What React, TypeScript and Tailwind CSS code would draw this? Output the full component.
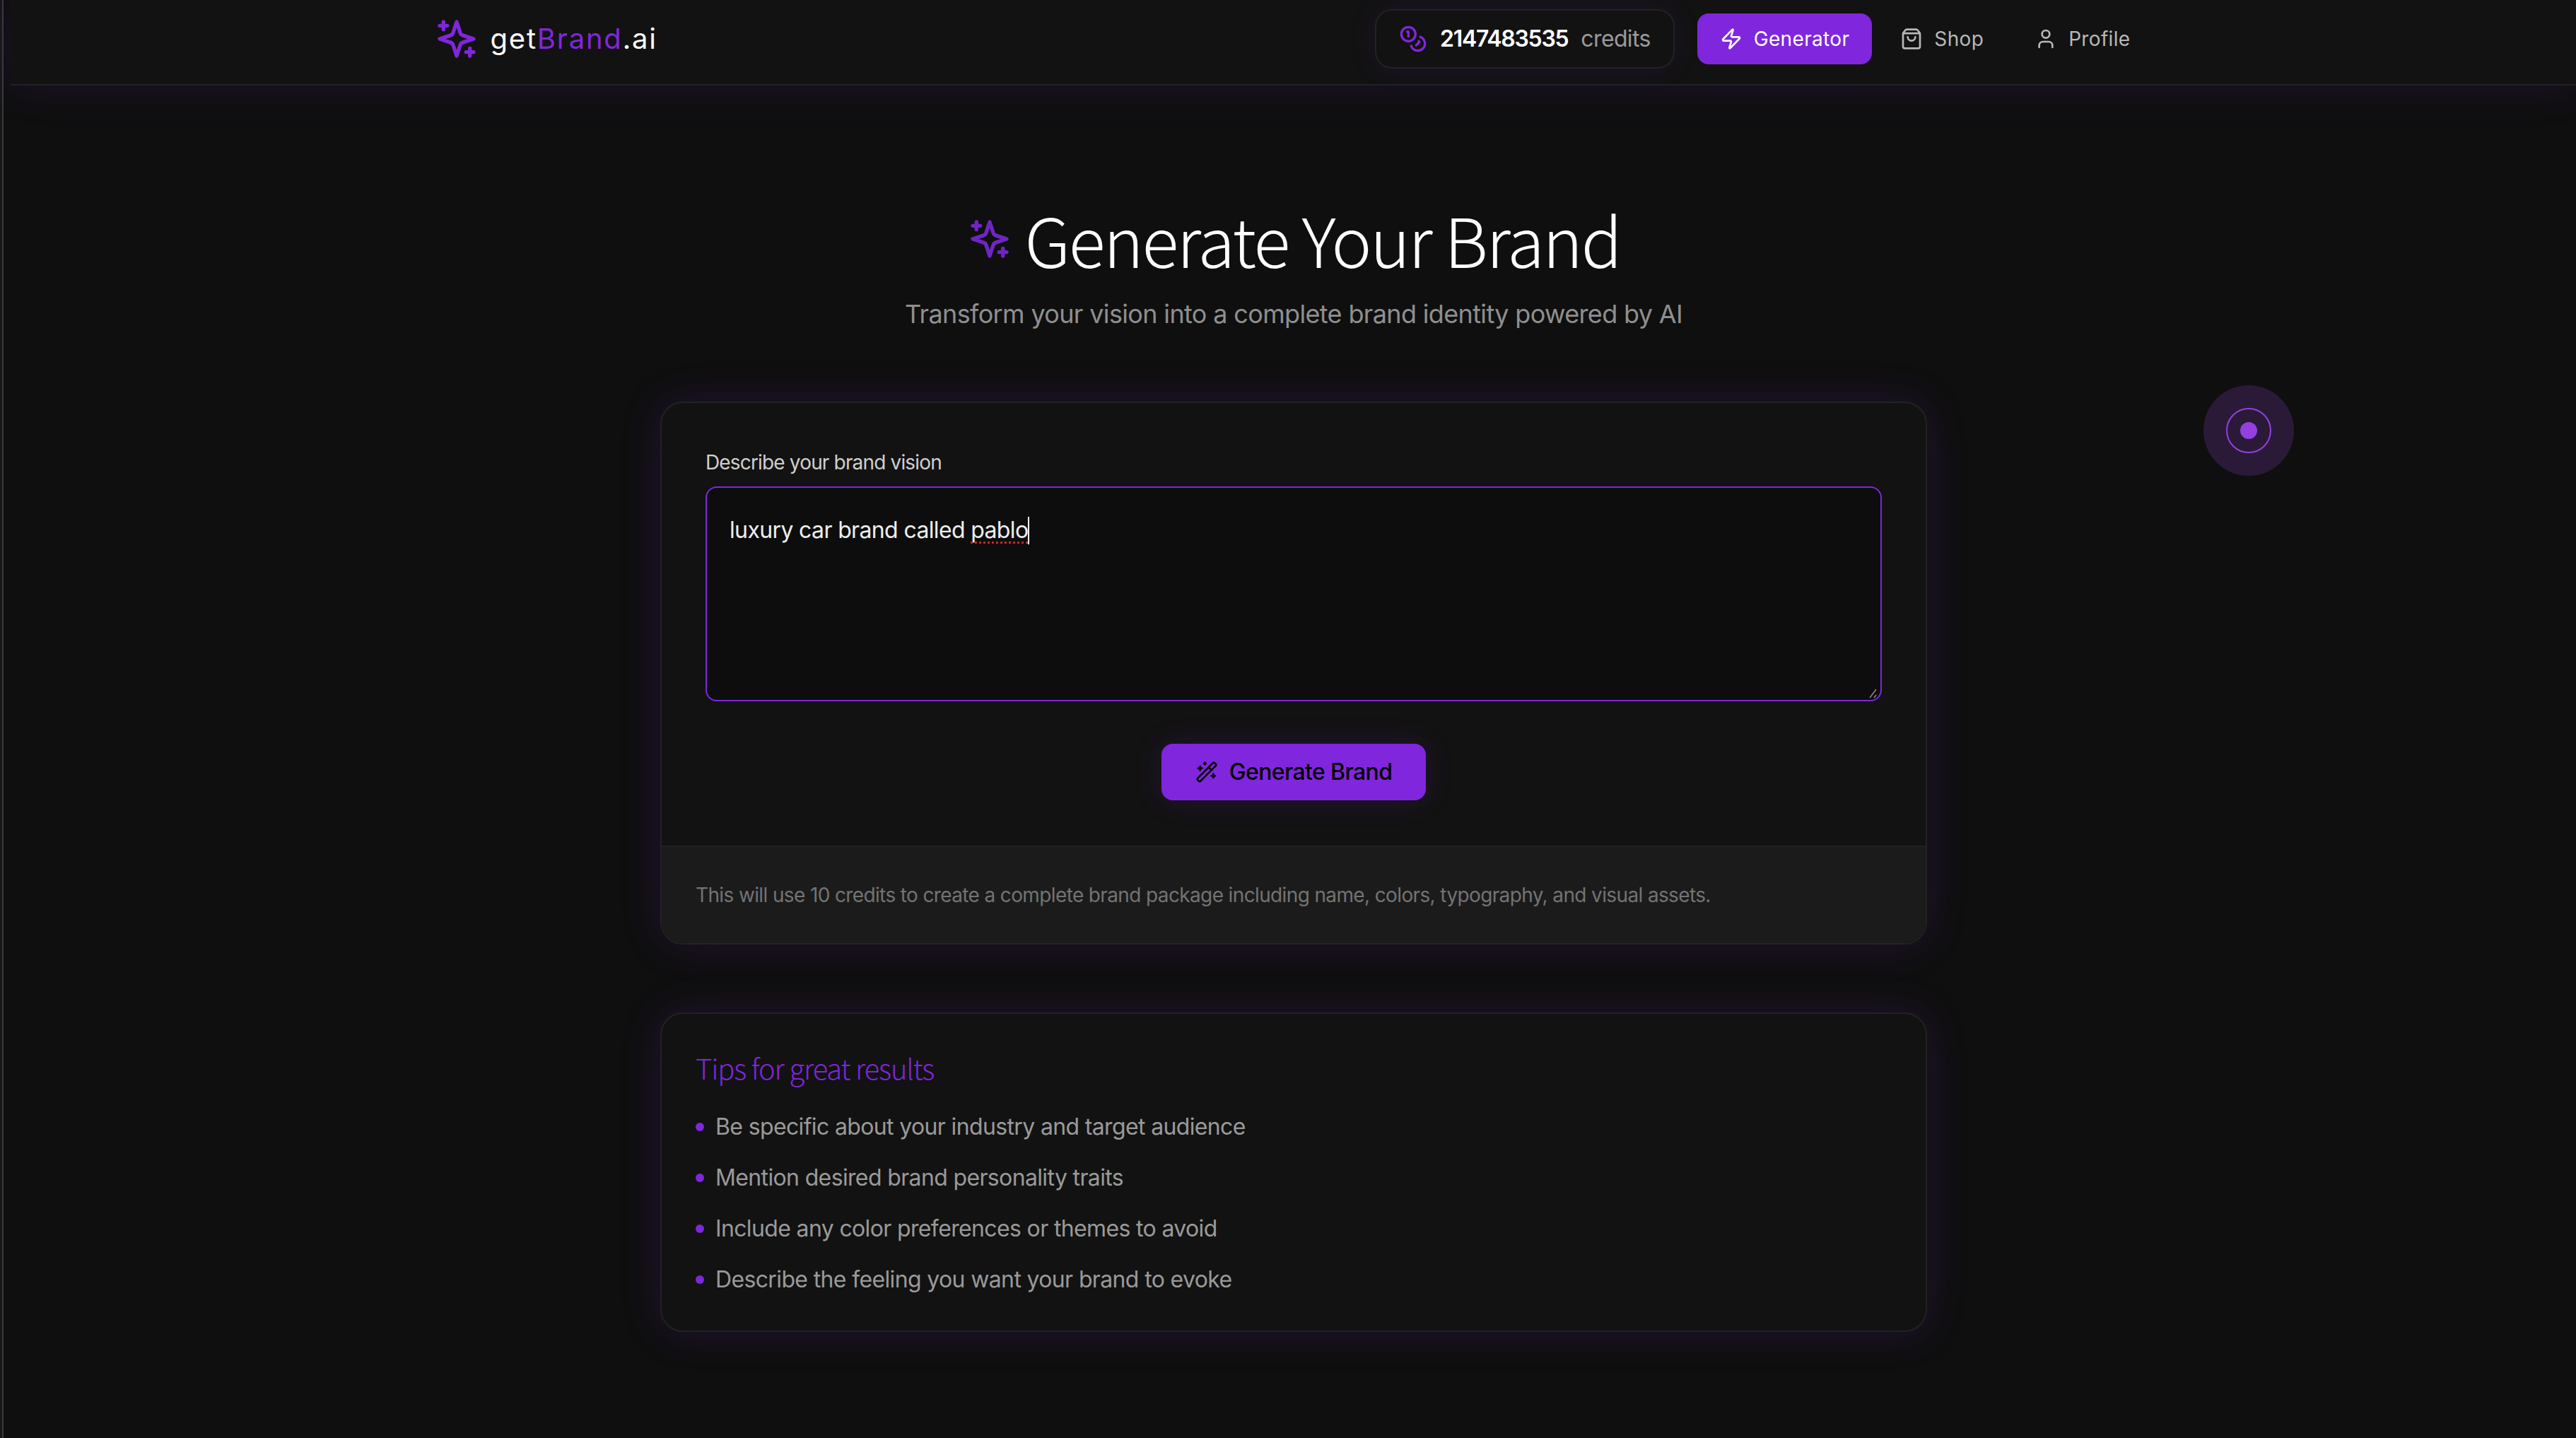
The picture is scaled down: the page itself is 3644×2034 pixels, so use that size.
import { Coins, ShoppingBag, User, WandSparkles, Zap } from "lucide-react";

const tips = [
  "Be specific about your industry and target audience",
  "Mention desired brand personality traits",
  "Include any color preferences or themes to avoid",
  "Describe the feeling you want your brand to evoke",
];

function BrandSparkles({ className }: { className: string }) {
  return (
    <svg className={className} viewBox="0 0 24 24" fill="none" stroke="currentColor" strokeWidth="2" strokeLinecap="round" strokeLinejoin="round">
      <path d="m12 3-1.912 5.813a2 2 0 0 1-1.275 1.275L3 12l5.813 1.912a2 2 0 0 1 1.275 1.275L12 21l1.912-5.813a2 2 0 0 1 1.275-1.275L21 12l-5.813-1.912a2 2 0 0 1-1.275-1.275L12 3Z" />
      <path d="M5 3v4" />
      <path d="M19 17v4" />
      <path d="M3 5h4" />
      <path d="M17 19h4" />
    </svg>
  );
}

function NavBar() {
  return (
    <header className="relative z-10 h-[121px] border-b-2 border-[#222222] bg-[#121212] shadow-[0_4px_60px_rgba(128,38,222,0.12)]">
      <div className="mx-auto flex h-[110px] w-[2560px] items-center justify-between px-[64px]">
        <div className="flex items-center gap-[16px]">
          <BrandSparkles className="h-[64px] w-[64px] text-[#8026dd]" />
          <span className="text-[40px] tracking-[0.045em] text-white">
            get<span className="text-[#8026dd]">Brand</span>.ai
          </span>
        </div>
        <nav className="flex items-center gap-2 text-[28px] leading-[40px] tracking-[0.012em]">
          <div className="mr-6 flex h-[84px] items-center gap-[18px] rounded-[24px] border-2 border-[#222222] bg-[#121212] px-8 text-[32px] tracking-[-0.02em] shadow-[0_0_40px_rgba(128,38,222,0.1)]">
            <Coins className="h-10 w-10 text-[#8026dd]" strokeWidth={2} />
            <span className="font-semibold tracking-[-0.04em] text-white">2147483535</span>
            <span className="text-[#9a9a9a]">credits</span>
          </div>
          <div className="flex h-[72px] items-center gap-4 rounded-[16px] bg-[#8026dd] px-8 text-white">
            <Zap className="h-8 w-8" strokeWidth={2} />
            Generator
          </div>
          <div className="flex h-[72px] items-center gap-4 px-8 text-[#b8b8b8]">
            <ShoppingBag className="h-8 w-8" strokeWidth={2} />
            Shop
          </div>
          <div className="flex h-[72px] items-center gap-4 px-8 text-[#b8b8b8]">
            <User className="h-8 w-8" strokeWidth={2} />
            Profile
          </div>
        </nav>
      </div>
    </header>
  );
}

function BrandForm() {
  return (
    <section className="mt-[96px] overflow-hidden rounded-[32px] border-2 border-[#222222] bg-[#121212] shadow-[0_0_60px_rgba(128,38,222,0.16)]">
      <div className="p-[62px] pb-[64px]">
        <label className="block text-[28px] leading-[44px] tracking-[-0.03em] text-[#cfcfcf]">Describe your brand vision</label>
        <div className="relative mt-3">
          <textarea className="block h-[304px] w-full resize-none rounded-[16px] border-2 border-[#8026dd] bg-[#0d0d0d]" />
          <div className="absolute left-[34px] top-[38px] flex items-center text-[32px] leading-[48px] tracking-[-0.02em] text-[#eeeeee]">
            <span>luxury car brand called&nbsp;</span>
            <span className="relative">
              pablo
              <span className="absolute inset-x-0 bottom-[5px] border-b-[3px] border-dotted border-[#c62828]" />
            </span>
            <span className="h-[39px] w-[2px] bg-white" />
          </div>
          <svg className="absolute bottom-[3px] right-[4px] h-4 w-4" viewBox="0 0 16 16" fill="none" stroke="#8a8a8a" strokeWidth="1.5">
            <path d="M3 14 12 2" />
            <path d="M9 14l3-4" />
          </svg>
        </div>
        <div className="mt-[60px] flex justify-center">
          <button className="flex h-[80px] w-[374px] items-center justify-center gap-4 rounded-[16px] bg-[#8026dd] text-[32px] font-medium tracking-[-0.02em] text-black shadow-[0_0_40px_rgba(128,38,222,0.16)]">
            <WandSparkles className="h-8 w-8" strokeWidth={2} />
            Generate Brand
          </button>
        </div>
      </div>
      <div className="border-t-2 border-[#222222] bg-[#1b1b1b] p-[48px] text-[28px] leading-[40px] tracking-[-0.0225em] text-[#737373]">
        This will use 10 credits to create a complete brand package including name, colors, typography, and visual assets.
      </div>
    </section>
  );
}

function TipsCard() {
  return (
    <section className="mt-[96px] rounded-[32px] border-2 border-[#222222] bg-[#121212] p-[48px] shadow-[0_0_60px_rgba(128,38,222,0.16)]">
      <h2 className="font-['Noto_Sans_CJK_SC',sans-serif] text-[40px] font-light leading-[56px] tracking-[-0.03em] text-[#8026dd]">Tips for great results</h2>
      <ul className="mt-[32px] flex flex-col gap-6">
        {tips.map((tip) => (
          <li key={tip} className="flex items-center gap-4 text-[32px] leading-[48px] tracking-[-0.02em] text-[#9a9a9a]">
            <span className="h-3 w-3 rounded-full bg-[#8026dd]" />
            {tip}
          </li>
        ))}
      </ul>
    </section>
  );
}

export default function App() {
  return (
    <div className="relative flex h-[2034px] overflow-hidden bg-[#0f0f0f] font-['Inter',sans-serif]">
      <div className="w-[5px] shrink-0 border-r-2 border-[#3a3a3a] bg-[#171717]" />
      <div className="min-w-0 flex-1">
        <div className="pl-[10px]">
          <NavBar />
        </div>
        <main className="ml-[929px] w-[1792px] pt-[161px]">
          <div className="flex items-center justify-center gap-[18px]">
            <BrandSparkles className="h-[64px] w-[64px] text-[#6f25c4]" />
            <h1 className="font-['Noto_Sans_CJK_SC',sans-serif] text-[96px] font-light leading-[112px] tracking-[-0.025em] text-white">Generate Your Brand</h1>
          </div>
          <p className="mt-[22px] text-center text-[36px] leading-[56px] tracking-[-0.018em] text-[#8f8f8f]">Transform your vision into a complete brand identity powered by AI</p>
          <BrandForm />
          <TipsCard />
        </main>
      </div>
      <div className="absolute left-[3117px] top-[545px] flex h-[128px] w-[128px] items-center justify-center rounded-full bg-[#2a1a38]">
        <div className="flex h-[64px] w-[64px] items-center justify-center rounded-full border-2 border-[#9340e0]">
          <div className="h-6 w-6 rounded-full bg-[#9340e0]" />
        </div>
      </div>
    </div>
  );
}
